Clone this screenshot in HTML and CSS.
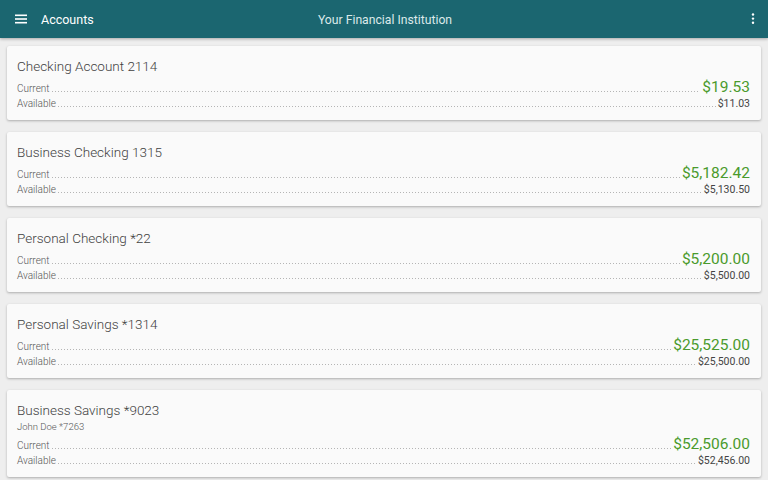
FILE: index.html
```html
<!DOCTYPE html>
<html>
<head>
<meta charset="utf-8">
<link rel="stylesheet" href="styles.css">
</head>
<body>
<header class="appbar">
  <div class="left">
    <svg class="icon" width="14" height="14" viewBox="0 0 14 14"><rect x="1" y="2.5" width="12" height="1.6" fill="#fff"/><rect x="1" y="6.2" width="12" height="1.6" fill="#fff"/><rect x="1" y="9.9" width="12" height="1.6" fill="#fff"/></svg>
    <span class="screen">Accounts</span>
  </div>
  <div class="center">Your Financial Institution</div>
  <div class="right">
    <svg class="icon" width="6" height="14" viewBox="0 0 6 14"><circle cx="3" cy="2.5" r="1.2" fill="#fff"/><circle cx="3" cy="6.6" r="1.2" fill="#fff"/><circle cx="3" cy="10.7" r="1.2" fill="#fff"/></svg>
  </div>
</header>
<main class="list">
  <section class="card">
    <div class="title">Checking Account 2114</div>
    <div class="row current"><span class="label">Current</span><span class="dots"></span><span class="amt big">$19.53</span></div>
    <div class="row avail"><span class="label">Available</span><span class="dots"></span><span class="amt">$11.03</span></div>
  </section>
  <section class="card">
    <div class="title">Business Checking 1315</div>
    <div class="row current"><span class="label">Current</span><span class="dots"></span><span class="amt big">$5,182.42</span></div>
    <div class="row avail"><span class="label">Available</span><span class="dots"></span><span class="amt">$5,130.50</span></div>
  </section>
  <section class="card">
    <div class="title">Personal Checking *22</div>
    <div class="row current"><span class="label">Current</span><span class="dots"></span><span class="amt big">$5,200.00</span></div>
    <div class="row avail"><span class="label">Available</span><span class="dots"></span><span class="amt">$5,500.00</span></div>
  </section>
  <section class="card">
    <div class="title">Personal Savings *1314</div>
    <div class="row current"><span class="label">Current</span><span class="dots"></span><span class="amt big">$25,525.00</span></div>
    <div class="row avail"><span class="label">Available</span><span class="dots"></span><span class="amt">$25,500.00</span></div>
  </section>
  <section class="card">
    <div class="title">Business Savings *9023</div>
    <div class="sub">John Doe *7263</div>
    <div class="row current"><span class="label">Current</span><span class="dots"></span><span class="amt big">$52,506.00</span></div>
    <div class="row avail"><span class="label">Available</span><span class="dots"></span><span class="amt">$52,456.00</span></div>
  </section>
</main>
</body>
</html>
```
FILE: styles.css
```css
html, body {
  margin: 0;
  padding: 0;
}
body {
  background: #eeeeee;
  font-family: Roboto, "Liberation Sans", sans-serif;
  width: 768px;
  height: 480px;
  overflow: hidden;
}
.appbar {
  height: 38px;
  background: #1b6670;
  color: #fff;
  display: flex;
  align-items: center;
  position: relative;
  box-shadow: 0 1px 3px rgba(0,0,0,0.3);
}
.left {
  display: flex;
  align-items: center;
  padding-left: 14px;
  flex: 1;
}
.icon { display: block; }
.screen {
  margin-left: 13px;
  font-size: 12.5px;
  font-weight: 400;
}
.center {
  font-size: 12.2px;
  color: #dce9ea;
  flex: 0 0 auto;
  padding-top: 1px;
}
.right {
  flex: 1;
  display: flex;
  justify-content: flex-end;
  padding-right: 12px;
}
.list {
  padding: 8px 7px 0 7px;
  display: flex;
  flex-direction: column;
  gap: 12px;
}
.card {
  background: #fafafa;
  border-radius: 2px;
  box-shadow: 0 1px 2.5px rgba(0,0,0,0.28);
  padding: 10px 11px 10px 10px;
}
.title {
  font-size: 13.5px;
  font-weight: 300;
  line-height: 20px;
  color: #3f3f3f;
}
.sub {
  font-size: 9.5px;
  font-weight: 300;
  line-height: 13px;
  color: #555;
}
.row {
  display: flex;
  align-items: baseline;
}
.row.current {
  height: 16px;
  line-height: 16px;
  padding-top: 3px;
}
.row.avail {
  height: 13px;
  line-height: 13px;
  margin-top: 2px;
}
.label {
  font-size: 10px;
  font-weight: 300;
  color: #555;
}
.dots {
  flex: 1;
  height: 1px;
  margin: 0 2px;
  background-image: linear-gradient(to right, #b5b5b5 1px, transparent 1px);
  background-size: 3px 1px;
  background-repeat: repeat-x;
}
.amt {
  font-size: 10.5px;
  color: #444;
}
.amt.big {
  font-size: 15.5px;
  font-weight: 400;
  color: #4a9a2c;
}
```
